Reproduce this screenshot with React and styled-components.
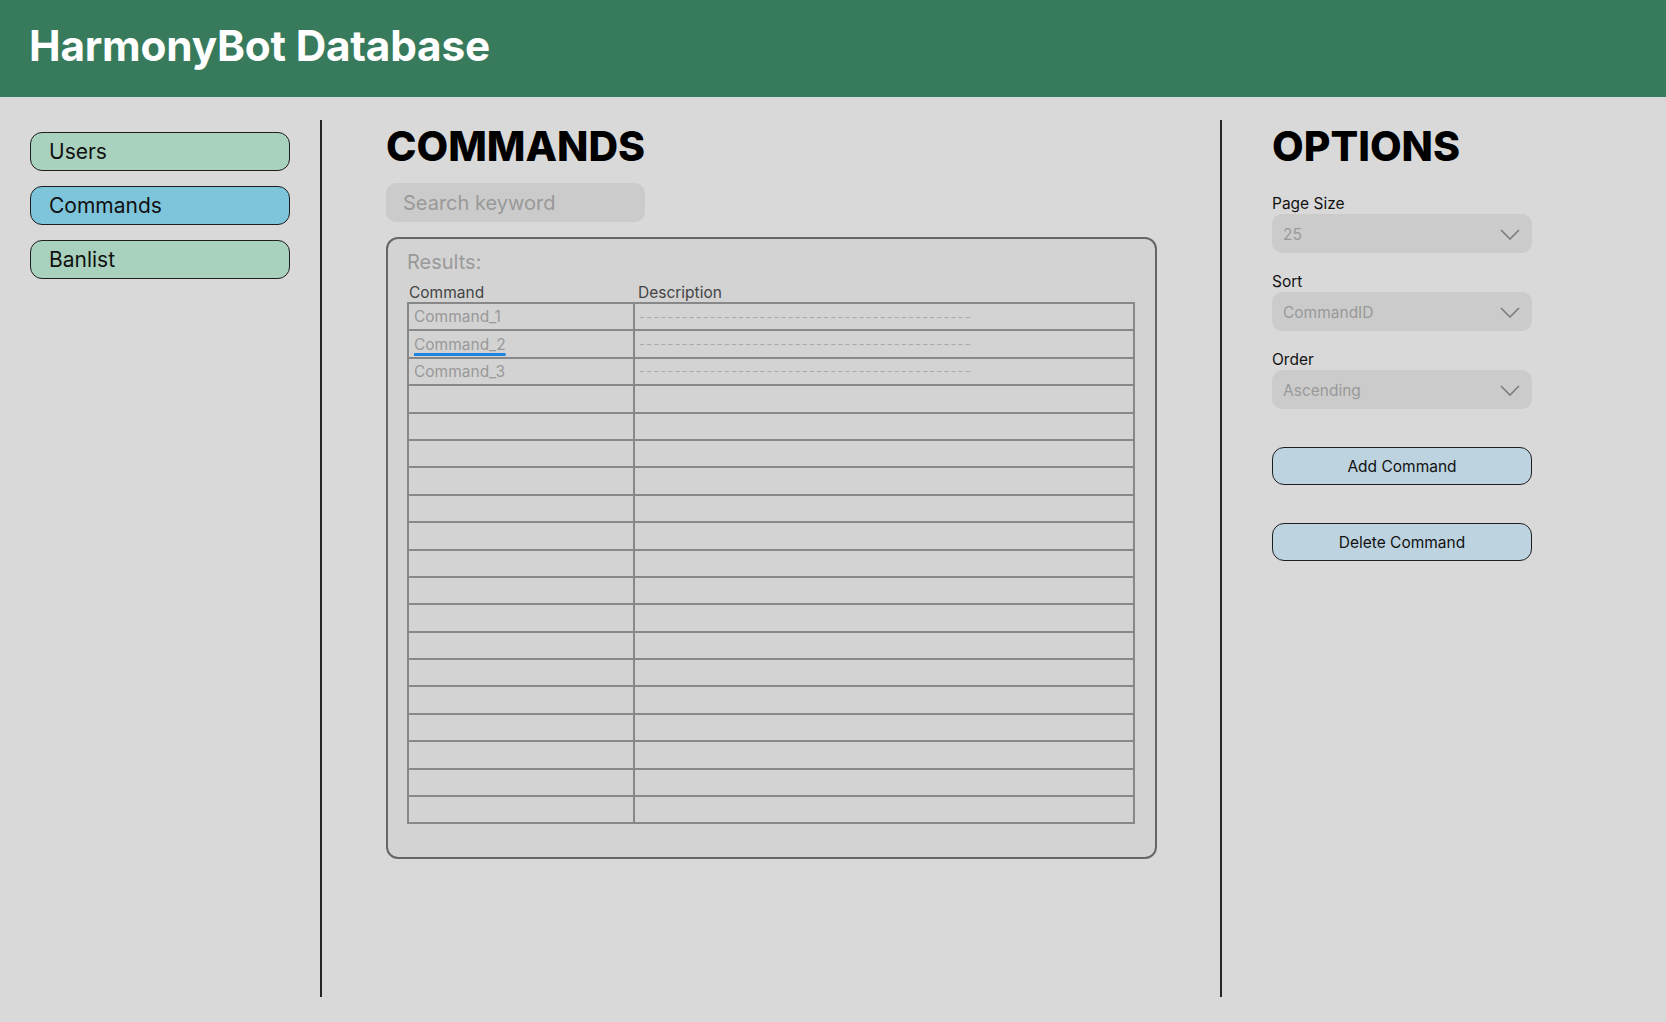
import React from 'react';
import styled, { createGlobalStyle } from 'styled-components';

const GlobalStyle = createGlobalStyle`
    body {
        margin: 0;
        background: #d9d9d9;
        font-family: Inter, 'Noto Sans', sans-serif;
    }
`;

const navItems = [
    { label: 'Users', active: false },
    { label: 'Commands', active: true },
    { label: 'Banlist', active: false }
];

const rows = [
    { name: 'Command_1', desc: true },
    { name: 'Command_2', desc: true, flagged: true },
    { name: 'Command_3', desc: true },
    ...Array.from({ length: 16 }, () => ({ name: '', desc: false }))
];

const options = [
    { label: 'Page Size', value: '25' },
    { label: 'Sort', value: 'CommandID' },
    { label: 'Order', value: 'Ascending' }
];

const Chevron = () => (
    <svg width="20" height="11" viewBox="0 0 20 11" fill="none">
        <path d="M1 1 L10 10 L19 1" stroke="#7c7c7c" strokeWidth="1.6" />
    </svg>
);

const App = () => {
    return (
        <>
            <GlobalStyle />
            <Header>
                <Title>HarmonyBot Database</Title>
            </Header>
            <Main>
                <Sidebar>
                    {navItems.map((item) => (
                        <NavButton key={item.label} $active={item.active}>
                            {item.label}
                        </NavButton>
                    ))}
                </Sidebar>

                <Center>
                    <Heading>COMMANDS</Heading>
                    <Search placeholder="Search keyword" />
                    <ResultsBox>
                        <ResultsLabel>Results:</ResultsLabel>
                        <HeadRow>
                            <span>Command</span>
                            <span>Description</span>
                        </HeadRow>
                        <Grid>
                            {rows.map((row, i) => (
                                <React.Fragment key={i}>
                                    <Cell>
                                        {row.flagged ? <Flagged>{row.name}</Flagged> : row.name}
                                    </Cell>
                                    <Cell $dashes>{row.desc ? '-'.repeat(47) : ''}</Cell>
                                </React.Fragment>
                            ))}
                        </Grid>
                    </ResultsBox>
                </Center>

                <Options>
                    <Heading>OPTIONS</Heading>
                    <Fields>
                        {options.map((opt) => (
                            <Field key={opt.label}>
                                <FieldLabel>{opt.label}</FieldLabel>
                                <Select>
                                    <span>{opt.value}</span>
                                    <Chevron />
                                </Select>
                            </Field>
                        ))}
                    </Fields>
                    <Actions>
                        <ActionButton>Add Command</ActionButton>
                        <ActionButton>Delete Command</ActionButton>
                    </Actions>
                </Options>
            </Main>
        </>
    );
};

export default App;

const Header = styled.header`
    height: 97px;
    background: #387b5c;
    display: flex;
    align-items: center;
    padding-left: 29px;
`;

const Title = styled.h1`
    margin: 0;
    margin-top: -6px;
    color: #fff;
    font-size: 42.3px;
    font-weight: 700;
    letter-spacing: -0.2px;
`;

const Main = styled.main`
    display: flex;
    padding-top: 23px;
    height: 877px;
`;

const Sidebar = styled.nav`
    width: 320px;
    box-sizing: border-box;
    padding: 12px 0 0 30px;
    display: flex;
    flex-direction: column;
    gap: 15px;
`;

const NavButton = styled.div`
    width: 260px;
    height: 39px;
    box-sizing: border-box;
    border: 1px solid #1e1e1e;
    border-radius: 12px;
    background: ${(p) => (p.$active ? '#7ec5dc' : '#a9d2be')};
    display: flex;
    align-items: center;
    padding-left: 18px;
    font-size: 21px;
    color: #111;
`;

const Center = styled.section`
    width: 900px;
    box-sizing: border-box;
    border-left: 2px solid #262626;
    padding: 2px 0 0 64px;
`;

const Heading = styled.h2`
    margin: 0;
    font-size: 41px;
    line-height: 48px;
    font-weight: 800;
    color: #000;
`;

const Search = styled.input`
    display: block;
    margin-top: 13px;
    width: 259px;
    height: 39px;
    box-sizing: border-box;
    border: none;
    border-radius: 10px;
    background: #cbcbcb;
    padding-left: 17px;
    font-family: inherit;
    font-size: 20px;
    outline: none;
    &::placeholder {
        color: #999;
    }
`;

const ResultsBox = styled.div`
    margin-top: 15px;
    width: 771px;
    box-sizing: border-box;
    border: 2px solid #666;
    border-radius: 12px;
    background: #d3d3d3;
    padding: 11px 20px 33px 19px;
`;

const ResultsLabel = styled.div`
    font-size: 20px;
    line-height: 24px;
    color: #9a9a9a;
`;

const HeadRow = styled.div`
    margin-top: 9px;
    display: grid;
    grid-template-columns: 229px 1fr;
    font-size: 15.5px;
    line-height: 19px;
    color: #444;
    padding-left: 2px;
`;

const Grid = styled.div`
    display: grid;
    grid-template-columns: 226px 1fr;
    grid-auto-rows: 27.4px;
    border-top: 2px solid #888;
    border-left: 2px solid #888;
`;

const Cell = styled.div`
    box-sizing: border-box;
    border-right: 2px solid #888;
    border-bottom: 2px solid #888;
    display: flex;
    align-items: center;
    padding-left: ${(p) => (p.$dashes ? '4px' : '5px')};
    font-size: ${(p) => (p.$dashes ? '13px' : '15.5px')};
    letter-spacing: ${(p) => (p.$dashes ? '1.1px' : '0')};
    color: ${(p) => (p.$dashes ? '#aaa' : '#999')};
    white-space: nowrap;
    overflow: hidden;
`;

const Flagged = styled.span`
    text-decoration: underline;
    text-decoration-color: #1e88e0;
    text-decoration-thickness: 2.5px;
    text-underline-offset: 3px;
`;

const Options = styled.aside`
    flex: 1;
    border-left: 2px solid #262626;
    padding: 2px 0 0 50px;
`;

const Fields = styled.div`
    margin-top: 24px;
    display: flex;
    flex-direction: column;
    gap: 19px;
`;

const Field = styled.div`
    display: flex;
    flex-direction: column;
    gap: 1px;
`;

const FieldLabel = styled.div`
    font-size: 15.5px;
    line-height: 19px;
    color: #111;
`;

const Select = styled.div`
    width: 260px;
    height: 39px;
    box-sizing: border-box;
    border-radius: 10px;
    background: #cbcbcb;
    display: flex;
    align-items: center;
    justify-content: space-between;
    padding: 2px 12px 0 11px;
    font-size: 15.5px;
    color: #999;
`;

const Actions = styled.div`
    margin-top: 38px;
    display: flex;
    flex-direction: column;
    gap: 38px;
`;

const ActionButton = styled.button`
    width: 260px;
    height: 38px;
    box-sizing: border-box;
    border: 1px solid #1e1e1e;
    border-radius: 12px;
    background: #bdd4e0;
    font-family: inherit;
    font-size: 15.5px;
    color: #111;
    cursor: pointer;
`;
